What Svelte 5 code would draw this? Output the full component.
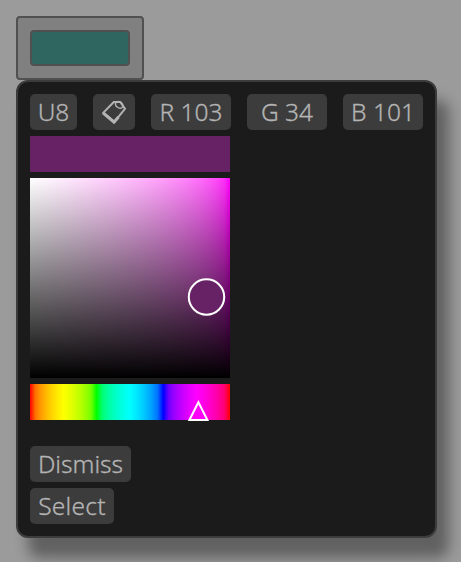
<script>
  const color = { r: 103, g: 34, b: 101 };
  const gamma = (l) => (l <= 0.0031308 ? 12.92 * l : 1.055 * Math.pow(l, 1 / 2.4) - 0.055);
  const byte = (l) => (255 * gamma(Math.max(0, Math.min(1, l)))).toFixed(1);

  function hueStop(h) {
    const channel = (n) => {
      const k = (n + h * 6) % 6;
      return 1 - Math.max(0, Math.min(k, 4 - k, 1));
    };
    return `rgb(${byte(channel(5))} ${byte(channel(3))} ${byte(channel(1))})`;
  }

  const hues = Array.from({ length: 37 }, (_, i) => hueStop(i / 36)).join(', ');
  const tints = Array.from({ length: 37 }, (_, i) => {
    const s = i / 36;
    return `rgb(${byte(1)} ${byte(1 - s)} ${byte(1 - s * 0.05)})`;
  }).join(', ');
</script>

<div class="page">
  <div class="swatch-button"><div class="swatch"></div></div>
  <div class="popup">
    <div class="row">
      <button class="u8"><span>U8</span></button>
      <button class="copy" aria-label="Copy">
        <svg width="26" height="26" viewBox="0 0 26 26" fill="none" stroke="#b4b4b4">
          <path d="M2.4 13.6 12.8 3H19.2L24 9.8 13.4 22.8Z" stroke-width="2" />
          <path d="M2 13.8 13 23.2 17.5 18" stroke-width="3" />
          <ellipse cx="18.2" cy="5.8" rx="4" ry="3" transform="rotate(35 18.2 5.8)" stroke-width="1.5" />
        </svg>
      </button>
      <button class="value r"><span>R {color.r}</span></button>
      <button class="value g"><span>G {color.g}</span></button>
      <button class="value b"><span>B {color.b}</span></button>
    </div>
    <div class="current" style="background: rgb({color.r}, {color.g}, {color.b})"></div>
    <div class="field" style="background: linear-gradient(to bottom, transparent, #000), linear-gradient(to right, {tints})">
      <svg width="200" height="200"><circle cx="176.5" cy="119" r="17.7" fill="#672265" stroke="#fff" stroke-width="2" /></svg>
    </div>
    <div class="hue" style="background: linear-gradient(to right, {hues})">
      <svg width="200" height="40"><path d="M168.4 18.3 177.4 36H159.4Z" fill="#ff00fa" stroke="#fff" stroke-width="2" /></svg>
    </div>
    <div class="actions">
      <button class="dismiss"><span>Dismiss</span></button>
      <button class="select"><span>Select</span></button>
    </div>
  </div>
</div>

<style>
  :global(body) { margin: 0; background: #9b9b9b; }
  .page {
    box-sizing: border-box;
    width: 461px;
    height: 562px;
    padding: 16px;
    overflow: hidden;
    background: #9b9b9b;
    font-family: "Noto Sans", "Open Sans", sans-serif;
    font-weight: 300;
  }
  .swatch-button {
    box-sizing: border-box;
    width: 128px;
    height: 64px;
    padding: 12px;
    border: 2px solid #505050;
    border-radius: 4px;
    background: #808080;
  }
  .swatch {
    box-sizing: border-box;
    width: 100px;
    height: 36px;
    border: 2px solid #505050;
    border-radius: 4px;
    background: #2f6760;
  }
  .popup {
    box-sizing: border-box;
    width: 421px;
    height: 458px;
    padding: 12px;
    display: flex;
    flex-direction: column;
    gap: 6px;
    border: 2px solid #3c3c3c;
    border-radius: 12px;
    background: #1b1b1b;
    box-shadow: 12px 20px 14px rgba(0, 0, 0, 0.376);
  }
  .row { display: flex; gap: 16px; }
  button {
    height: 36px;
    padding: 0;
    display: flex;
    align-items: center;
    justify-content: center;
    border: 0;
    border-radius: 5px;
    background: #3c3c3c;
    color: #b4b4b4;
    font: inherit;
    font-size: 24.5px;
    line-height: 36px;
    white-space: nowrap;
    -webkit-text-stroke: 0.3px #b4b4b4;
  }
  .u8 { width: 47px; }
  .copy { width: 42px; }
  .value { width: 80px; }
  .current { width: 200px; height: 36px; }
  .field { width: 200px; height: 200px; }
  .hue { width: 200px; height: 36px; }
  svg { display: block; overflow: visible; }
  .actions {
    margin-top: 20px;
    display: flex;
    flex-direction: column;
    gap: 6px;
  }
  .dismiss { width: 101px; }
  .select { width: 84px; letter-spacing: 0.25px; }
</style>
